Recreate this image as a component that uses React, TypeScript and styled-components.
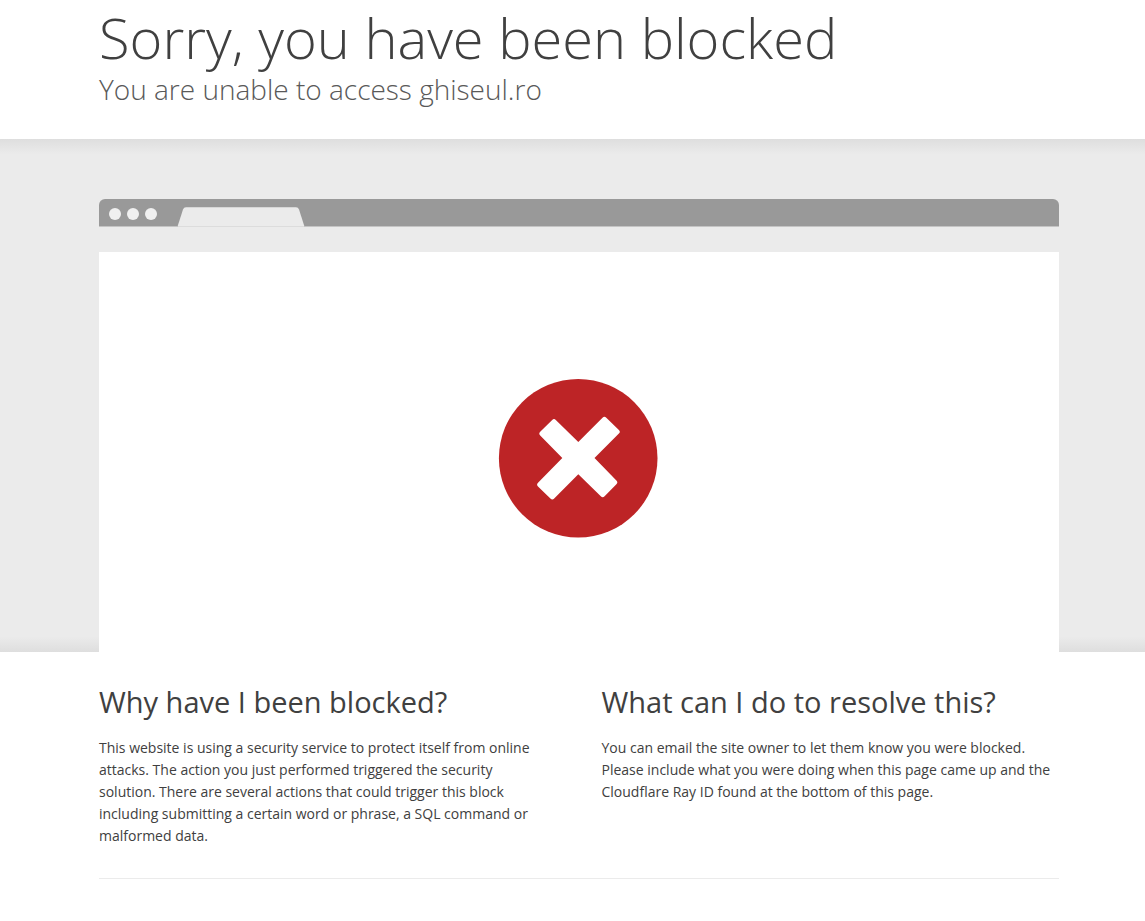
import React from "react";
import styled, { createGlobalStyle } from "styled-components";

const GlobalStyle = createGlobalStyle`
  *, *::before, *::after {
    box-sizing: border-box;
  }
  body {
    margin: 0;
    background: #fff;
    color: #404040;
    font-family: "Segoe UI", "Open Sans", "Noto Sans", sans-serif;
    font-size: 14px;
    line-height: 22px;
  }
`;

const Container = styled.div`
  padding: 0 86px 0 99px;
`;

const Header = styled.header`
  padding: 4px 0 32px;
`;

const Title = styled.h1`
  margin: 0 0 2px;
  font-size: 56px;
  font-weight: 300;
  line-height: 66px;
`;

const Subtitle = styled.h2`
  margin: 0;
  color: #595959;
  font-size: 28px;
  font-weight: 300;
  line-height: 35px;
`;

const Highlight = styled.section`
  padding-top: 60px;
  background: #ebebeb;
  background-image: linear-gradient(to bottom, #dedede, #ebebeb 3%, #ebebeb 97%, #dedede);
`;

const BrowserBar = styled.div`
  display: flex;
  align-items: center;
  height: 28px;
  padding-left: 10px;
  border-bottom: 1px solid #c4c4c4;
  border-radius: 6px 6px 0 0;
  background: #999;
`;

const Dots = styled.div`
  display: flex;
  gap: 6px;
  padding-top: 2px;
`;

const Dot = styled.span`
  width: 12px;
  height: 12px;
  border-radius: 50%;
  background: #f0f0f0;
`;

const TabShape = styled.svg`
  display: block;
  align-self: flex-end;
  margin: 0 0 -1px 20px;
`;

const Screen = styled.div`
  display: flex;
  justify-content: center;
  margin-top: 25px;
  padding: 126px 0 114px;
  background: #fff;
`;

const BlockedIcon = styled.svg`
  display: block;
`;

const Columns = styled.div`
  display: grid;
  grid-template-columns: 1fr 1fr;
  gap: 45px;
  padding: 30px 0 31px;
  border-bottom: 1px solid #ebebeb;
`;

const Column = styled.section<{ $inset?: boolean }>`
  padding-right: ${({ $inset }) => ($inset ? "16px" : "0")};
`;

const ColumnTitle = styled.h2`
  margin: 0 0 15px;
  font-size: 29px;
  font-weight: 400;
  line-height: 40px;
`;

const ColumnText = styled.p`
  margin: 0;
`;

export default function App() {
  return (
    <>
      <GlobalStyle />
      <Header>
        <Container>
          <Title>Sorry, you have been blocked</Title>
          <Subtitle>You are unable to access ghiseul.ro</Subtitle>
        </Container>
      </Header>
      <main>
        <Highlight>
          <Container>
            <BrowserBar>
              <Dots>
                <Dot />
                <Dot />
                <Dot />
              </Dots>
              <TabShape width="128" height="20" viewBox="0 0 128 20" aria-hidden="true">
                <path d="M0.7 19 L6 2.4 Q6.8 0.3 9 0.3 H119 Q121.2 0.3 122 2.4 L127.3 19 Z" fill="#ebebeb" />
                <rect x="1" y="19" width="126" height="1" fill="#dcdcdc" />
              </TabShape>
            </BrowserBar>
            <Screen>
              <BlockedIcon width="162" height="160" viewBox="0 0 162 160" role="img" aria-label="Blocked">
                <circle cx="80.2" cy="80.2" r="79.3" fill="#bd2426" />
                <path
                  fill="#fff"
                  d="M54.2 42 Q56 40.2 57.8 42 L80.3 64 L104.5 39.8 Q106.4 37.9 108.3 39.8 L120.9 51.9 Q122.8 53.7 120.9 55.6 L96.5 80 L118.4 102.4 Q120.3 104.3 118.4 106.2 L106.6 118.2 Q104.7 120.1 102.8 118.2 L80.3 96.3 L56.2 120.5 Q54.3 122.4 52.4 120.5 L40 108.6 Q38.1 106.7 40 104.8 L64.3 80 L42.2 57.5 Q40.3 55.6 42.2 53.7 Z"
                />
              </BlockedIcon>
            </Screen>
          </Container>
        </Highlight>
        <Container>
          <Columns>
            <Column $inset>
              <ColumnTitle>Why have I been blocked?</ColumnTitle>
              <ColumnText>
                This website is using a security service to protect itself from online attacks. The action you just
                performed triggered the security solution. There are several actions that could trigger this block
                including submitting a certain word or phrase, a SQL command or malformed data.
              </ColumnText>
            </Column>
            <Column>
              <ColumnTitle>What can I do to resolve this?</ColumnTitle>
              <ColumnText>
                You can email the site owner to let them know you were blocked. Please include what you were doing when
                this page came up and the Cloudflare Ray ID found at the bottom of this page.
              </ColumnText>
            </Column>
          </Columns>
        </Container>
      </main>
    </>
  );
}
